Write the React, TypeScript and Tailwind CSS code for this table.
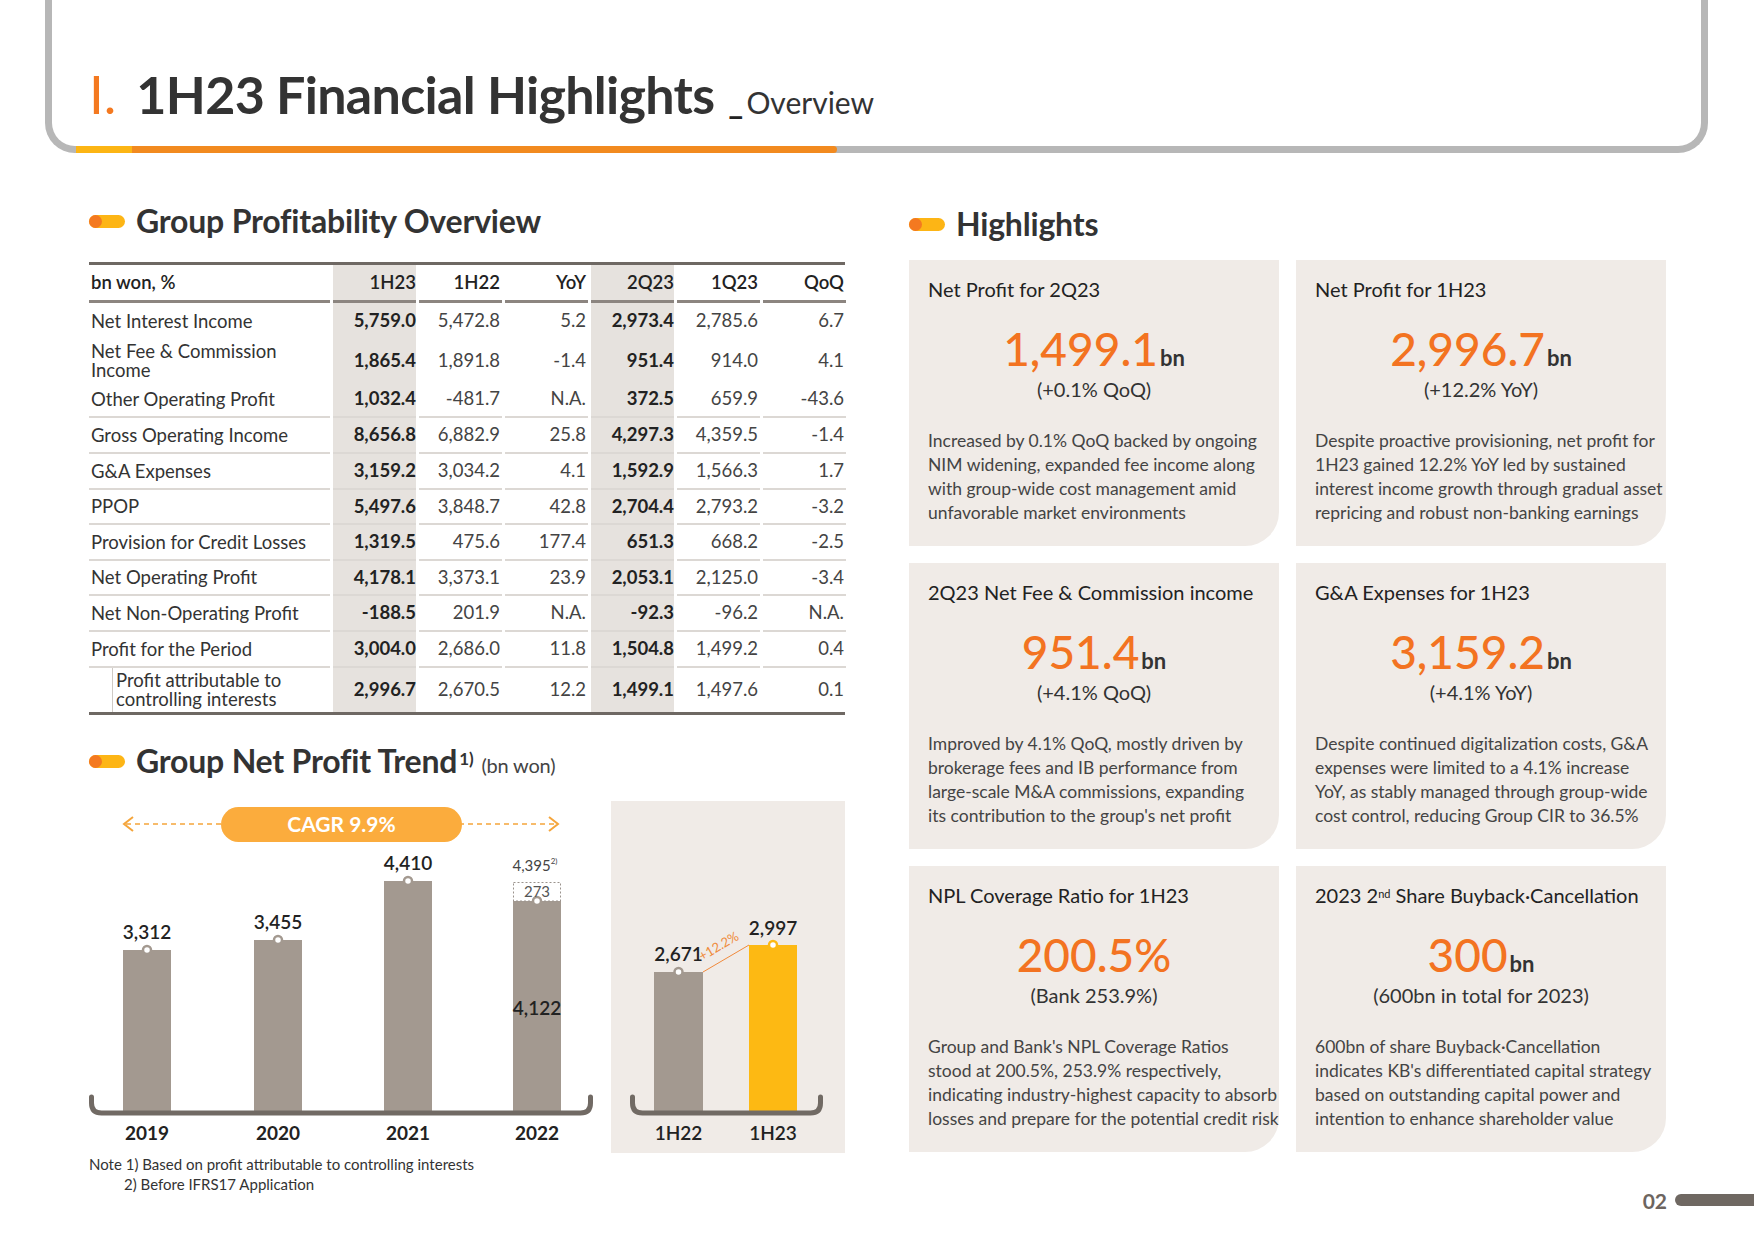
import React from 'react';

const font = "font-['Lato','Noto_Sans',sans-serif]";

type Row = {
  label: string[];
  values: string[];
  h: string;
  sep: boolean;
  indent?: boolean;
};

const rows: Row[] = [
  { label: ['Net Interest Income'], values: ['5,759.0', '5,472.8', '5.2', '2,973.4', '2,785.6', '6.7'], h: 'h-[36px]', sep: false },
  { label: ['Net Fee & Commission', 'Income'], values: ['1,865.4', '1,891.8', '-1.4', '951.4', '914.0', '4.1'], h: 'h-[43px]', sep: false },
  { label: ['Other Operating Profit'], values: ['1,032.4', '-481.7', 'N.A.', '372.5', '659.9', '-43.6'], h: 'h-[36px]', sep: true },
  { label: ['Gross Operating Income'], values: ['8,656.8', '6,882.9', '25.8', '4,297.3', '4,359.5', '-1.4'], h: 'h-[36px]', sep: true },
  { label: ['G&A Expenses'], values: ['3,159.2', '3,034.2', '4.1', '1,592.9', '1,566.3', '1.7'], h: 'h-[36px]', sep: true },
  { label: ['PPOP'], values: ['5,497.6', '3,848.7', '42.8', '2,704.4', '2,793.2', '-3.2'], h: 'h-[35px]', sep: true },
  { label: ['Provision for Credit Losses'], values: ['1,319.5', '475.6', '177.4', '651.3', '668.2', '-2.5'], h: 'h-[36px]', sep: true },
  { label: ['Net Operating Profit'], values: ['4,178.1', '3,373.1', '23.9', '2,053.1', '2,125.0', '-3.4'], h: 'h-[35px]', sep: true },
  { label: ['Net Non-Operating Profit'], values: ['-188.5', '201.9', 'N.A.', '-92.3', '-96.2', 'N.A.'], h: 'h-[36px]', sep: true },
  { label: ['Profit for the Period'], values: ['3,004.0', '2,686.0', '11.8', '1,504.8', '1,499.2', '0.4'], h: 'h-[36px]', sep: true },
  { label: ['Profit attributable to', 'controlling interests'], values: ['2,996.7', '2,670.5', '12.2', '1,499.1', '1,497.6', '0.1'], h: 'h-[44px]', sep: false, indent: true },
];

const cols = ['1H23', '1H22', 'YoY', '2Q23', '1Q23', 'QoQ'];
const shaded = [true, false, false, true, false, false];

const cards = [
  {
    title: <>Net Profit for 2Q23</>,
    value: '1,499.1',
    unit: 'bn',
    sub: '(+0.1% QoQ)',
    body: ['Increased by 0.1% QoQ backed by ongoing', 'NIM widening, expanded fee income along', 'with group-wide cost management amid', 'unfavorable market environments'],
  },
  {
    title: <>Net Profit for 1H23</>,
    value: '2,996.7',
    unit: 'bn',
    sub: '(+12.2% YoY)',
    body: ['Despite proactive provisioning, net profit for', '1H23 gained 12.2% YoY led by sustained', 'interest income growth through gradual asset', 'repricing and robust non-banking earnings'],
  },
  {
    title: <>2Q23 Net Fee &amp; Commission income</>,
    value: '951.4',
    unit: 'bn',
    sub: '(+4.1% QoQ)',
    body: ['Improved by 4.1% QoQ, mostly driven by', 'brokerage fees and IB performance from', 'large-scale M&A commissions, expanding', "its contribution to the group's net profit"],
  },
  {
    title: <>G&amp;A Expenses for 1H23</>,
    value: '3,159.2',
    unit: 'bn',
    sub: '(+4.1% YoY)',
    body: ['Despite continued digitalization costs, G&A', 'expenses were limited to a 4.1% increase', 'YoY, as stably managed through group-wide', 'cost control, reducing Group CIR to 36.5%'],
  },
  {
    title: <>NPL Coverage Ratio for 1H23</>,
    value: '200.5%',
    unit: '',
    sub: '(Bank 253.9%)',
    body: ["Group and Bank's NPL Coverage Ratios", 'stood at 200.5%, 253.9% respectively,', 'indicating industry-highest capacity to absorb', 'losses and prepare for the potential credit risk'],
  },
  {
    title: (
      <>
        2023 2<sup className="text-[11px]">nd</sup> Share Buyback·Cancellation
      </>
    ),
    value: '300',
    unit: 'bn',
    sub: '(600bn in total for 2023)',
    body: ['600bn of share Buyback·Cancellation', "indicates KB's differentiated capital strategy", 'based on outstanding capital power and', 'intention to enhance shareholder value'],
  },
];

const SectionTitle = ({ children }: { children: React.ReactNode }) => (
  <div className="flex items-center h-[36px]">
    <div className="flex w-[36px] h-[13px] rounded-full bg-[#fdb515]">
      <div className="w-[13px] h-[13px] rounded-full bg-[#f47920]" />
    </div>
    <div className="ml-[11px] text-[32px] font-bold text-[#333] leading-none tracking-[-0.2px]">{children}</div>
  </div>
);

const Table = () => (
  <div className="mt-[23px] border-t-[3px] border-b-[3px] border-[#6e6863] text-[18.5px] text-[#333]">
    <div className="grid grid-cols-[241px_repeat(6,83px)] gap-x-[3px] h-[38px]">
      <div className="flex items-center pl-[2px] border-b-[3px] border-[#8c8580] font-semibold text-[#222]">bn won, %</div>
      {cols.map((c, i) => (
        <div
          key={c}
          className={`flex items-center justify-end border-b-[3px] border-[#8c8580] font-semibold text-[#222] ${shaded[i] ? 'bg-[#e6e2de]' : 'pr-[2px]'}`}
        >
          {c}
        </div>
      ))}
    </div>
    {rows.map((r, ri) => (
      <div key={ri} className={`grid grid-cols-[241px_repeat(6,83px)] gap-x-[3px] ${r.h}`}>
        <div className={`flex ${r.sep ? 'border-b-2 border-[#dcd8d4]' : ''} ${r.indent ? 'pl-[23px]' : 'pl-[2px]'}`}>
          <div className={`flex items-center leading-[19px] ${r.indent ? 'border-l-[1.5px] border-[#cfcac5] pl-[3px]' : ''}`}>
            <div>
              {r.label.map((l) => (
                <div key={l}>{l}</div>
              ))}
            </div>
          </div>
        </div>
        {r.values.map((v, i) => (
          <div
            key={i}
            className={`flex items-center justify-end ${r.sep ? 'border-b-2 border-[#dcd8d4]' : ''} ${
              shaded[i] ? 'bg-[#e6e2de] font-bold text-[#222]' : 'pr-[2px] text-[#444]'
            }`}
          >
            {v}
          </div>
        ))}
      </div>
    ))}
  </div>
);

const TrendChart = () => {
  const bars = [
    { x: 34, y: 149, label: '3,312', year: '2019' },
    { x: 165, y: 139, label: '3,455', year: '2020' },
    { x: 295, y: 80, label: '4,410', year: '2021' },
    { x: 424, y: 100, label: '', year: '2022' },
  ];
  return (
    <svg width="504" height="352" viewBox="0 0 504 352" className="shrink-0">
      <line x1="37" y1="23" x2="467" y2="23" stroke="#f5a53b" strokeWidth="1.6" strokeDasharray="5 4" />
      <polyline points="44,16 35,23 44,30" fill="none" stroke="#f5a53b" strokeWidth="2" />
      <polyline points="460,16 469,23 460,30" fill="none" stroke="#f5a53b" strokeWidth="2" />
      <rect x="132" y="6" width="241" height="35" rx="17.5" fill="#fbac3d" />
      <text x="252.5" y="31" textAnchor="middle" fill="#fff" fontSize="21" fontWeight="700">
        CAGR 9.9%
      </text>
      {bars.map((b) => (
        <g key={b.year}>
          <rect x={b.x} y={b.y} width="48" height={311 - b.y} fill="#a39990" />
          <circle cx={b.x + 24} cy={b.y} r="4" fill="#fff" stroke="#a39990" strokeWidth="2.5" />
          {b.label && (
            <text x={b.x + 24} y={b.y - 11} textAnchor="middle" fontSize="19" fontWeight="600" fill="#222">
              {b.label}
            </text>
          )}
          <text x={b.x + 24} y="339" textAnchor="middle" fontSize="19" fontWeight="700" fill="#222">
            {b.year}
          </text>
        </g>
      ))}
      <rect x="424.5" y="81.5" width="47" height="18.5" fill="#fff" stroke="#9a938d" strokeWidth="1" strokeDasharray="2 2" />
      <circle cx="448" cy="100" r="4" fill="#fff" stroke="#a39990" strokeWidth="2.5" />
      <text x="448" y="96" textAnchor="middle" fontSize="15" fill="#555">
        273
      </text>
      <text x="446" y="70" textAnchor="middle" fontSize="15" fill="#444">
        4,395
        <tspan fontSize="8" dy="-7">
          2)
        </tspan>
      </text>
      <text x="448" y="214" textAnchor="middle" fontSize="19" fontWeight="600" fill="#222">
        4,122
      </text>
      <path d="M2.5 296 L2.5 302 Q2.5 312 12.5 312 L491.5 312 Q501.5 312 501.5 302 L501.5 296" fill="none" stroke="#716a64" strokeWidth="5" strokeLinecap="round" />
    </svg>
  );
};

const HalfChart = () => (
  <div className="w-[234px] h-[352px] bg-[#f0ebe7] shrink-0">
    <svg width="234" height="352" viewBox="0 0 234 352">
      <rect x="43" y="171" width="49" height="140" fill="#a39990" />
      <rect x="138" y="144" width="48" height="167" fill="#fdb913" />
      <line x1="92" y1="171" x2="138" y2="144" stroke="#f08a3c" strokeWidth="1" />
      <circle cx="67.5" cy="171" r="4" fill="#fff" stroke="#a39990" strokeWidth="2.5" />
      <circle cx="162" cy="144" r="4" fill="#fff" stroke="#fdb913" strokeWidth="2.5" />
      <text x="110" y="149" textAnchor="middle" fontSize="13" fill="#ef8a3a" transform="rotate(-30 110 149)">
        +12.2%
      </text>
      <text x="67.5" y="160" textAnchor="middle" fontSize="19" fontWeight="600" fill="#222">
        2,671
      </text>
      <text x="162" y="134" textAnchor="middle" fontSize="19" fontWeight="600" fill="#222">
        2,997
      </text>
      <path d="M21.5 296 L21.5 302 Q21.5 312 31.5 312 L199.5 312 Q209.5 312 209.5 302 L209.5 296" fill="none" stroke="#716a64" strokeWidth="5" strokeLinecap="round" />
      <text x="67.5" y="339" textAnchor="middle" fontSize="19" fontWeight="600" fill="#222">
        1H22
      </text>
      <text x="162" y="339" textAnchor="middle" fontSize="19" fontWeight="600" fill="#222">
        1H23
      </text>
    </svg>
  </div>
);

export default function App() {
  return (
    <div className={`w-[1754px] h-[1241px] bg-white overflow-hidden flex flex-col ${font}`}>
      {/* header frame */}
      <div className="relative ml-[45px] mr-[46px] h-[153px] shrink-0 border-x-[7px] border-b-[7px] border-[#b7b7b7] rounded-b-[30px]">
        <div className="flex items-baseline pl-[37px] pt-[67px] leading-none">
          <span className="text-[53px] text-[#f47920]">I.</span>
          <span className="ml-[20px] text-[52px] font-bold text-[#333] tracking-[-0.7px]">1H23 Financial Highlights</span>
          <span className="ml-[14px] text-[32px] font-black text-[#222]">_</span>
          <span className="ml-[3px] text-[30px] text-[#333]">Overview</span>
        </div>
        <div className="absolute left-[24px] bottom-[-7px] flex w-[761px] h-[7px] rounded-r-full overflow-hidden">
          <div className="w-[56px] bg-[#fcb514]" />
          <div className="flex-1 bg-[#f28a1f]" />
        </div>
      </div>

      <div className="flex pl-[89px]">
        {/* left column */}
        <div className="w-[756px] shrink-0 pt-[50px]">
          <SectionTitle>Group Profitability Overview</SectionTitle>
          <Table />
          <div className="mt-[28px]">
            <SectionTitle>
              Group Net Profit Trend<sup className="text-[17px] font-bold ml-[2px]">1)</sup>
              <span className="ml-[8px] text-[20px] font-normal text-[#444]">(bn won)</span>
            </SectionTitle>
          </div>
          <div className="flex gap-[18px] mt-[22px]">
            <TrendChart />
            <HalfChart />
          </div>
          <div className="mt-[1px] text-[15px] leading-[20px] text-[#333]">
            <div>Note 1) Based on profit attributable to controlling interests</div>
            <div className="pl-[35px]">2) Before IFRS17 Application</div>
          </div>
        </div>

        {/* right column */}
        <div className="flex-1 ml-[64px] pt-[53px]">
          <SectionTitle>Highlights</SectionTitle>
          <div className="grid grid-cols-2 gap-[17px] w-[757px] mt-[18px]">
            {cards.map((c, i) => (
              <div key={i} className="h-[286px] bg-[#f0ebe7] rounded-br-[34px] px-[19px] pt-[16px] flex flex-col">
                <div className="text-[20px] leading-[26px] text-[#222] whitespace-nowrap">{c.title}</div>
                <div className="mt-[24px] text-center leading-none">
                  <span className="text-[46px] text-[#f37321] font-medium">{c.value}</span>
                  {c.unit && <span className="ml-[2px] text-[22px] font-bold text-[#333]">{c.unit}</span>}
                </div>
                <div className="mt-[4px] text-center text-[20px] leading-[26px] text-[#333]">{c.sub}</div>
                <div className="mt-[27px] text-[17.5px] leading-[24px] text-[#444] whitespace-nowrap">
                  {c.body.map((l) => (
                    <div key={l}>{l}</div>
                  ))}
                </div>
              </div>
            ))}
          </div>
          <div className="flex items-center justify-end mt-[38px] h-[20px]">
            <span className="text-[21px] font-bold text-[#6d655f] leading-none">02</span>
            <div className="ml-[8px] w-[79px] h-[12px] rounded-l-full bg-[#6f6862]" />
          </div>
        </div>
      </div>
    </div>
  );
}
